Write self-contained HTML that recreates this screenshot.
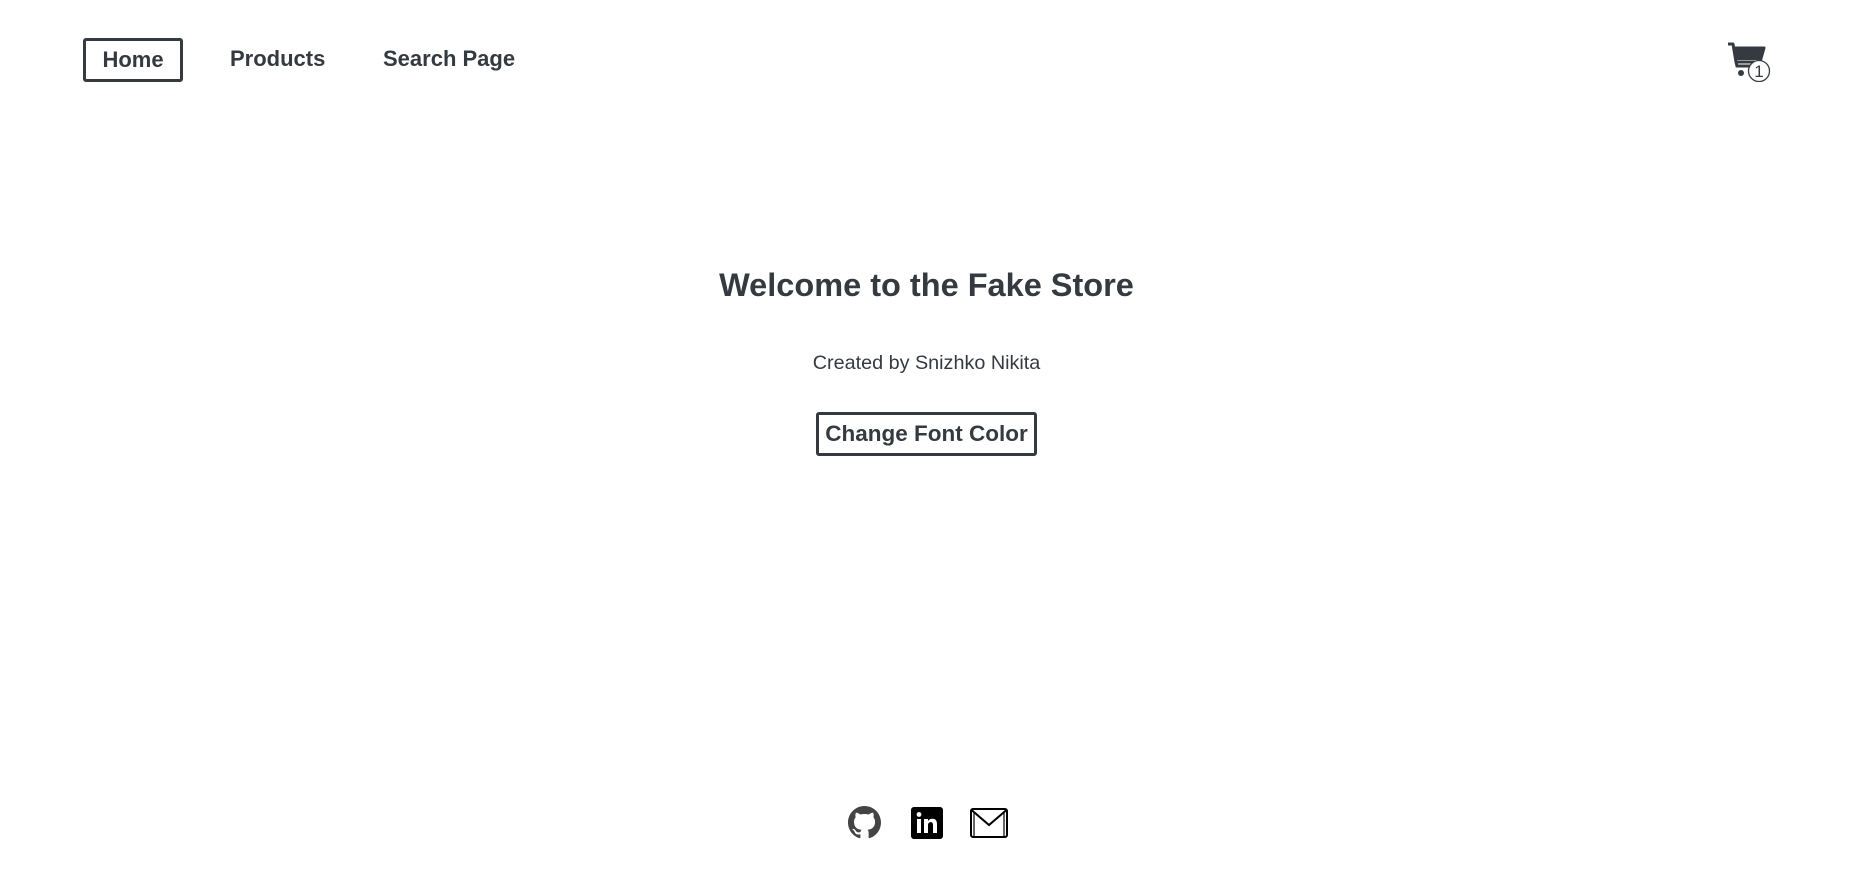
<!DOCTYPE html>
<html><head><meta charset="utf-8"><style>
*{margin:0;padding:0;box-sizing:border-box}
body{width:1853px;height:879px;background:#fff;font-family:"Liberation Sans",Arial,sans-serif;color:#343a40;position:relative;overflow:hidden}
.nav a{position:absolute;font-weight:bold;font-size:22px;color:#343a40;text-decoration:none;line-height:26px}
.home{left:83px;top:38px;width:100px;height:44px;border:3px solid #343a40;border-radius:3px;display:flex;align-items:center;justify-content:center}
h1{position:absolute;left:0;width:1853px;text-align:center;top:266px;font-size:32.5px;line-height:38px}
.sub{position:absolute;left:0;width:1853px;text-align:center;top:351px;font-size:19.8px;line-height:24px}
.btn{position:absolute;left:816px;top:412px;width:221px;height:44px;border:3px solid #343a40;border-radius:3px;font-weight:bold;font-size:22.5px;display:flex;align-items:center;justify-content:center}
</style></head><body>
<div class="nav">
<a class="home" style="position:absolute">Home</a>
<a style="left:230px;top:46px">Products</a>
<a style="left:383px;top:46px">Search Page</a>
</div>
<svg style="position:absolute;left:1726px;top:40px" width="50" height="42" viewBox="0 0 50 42">
<path d="M2 4 H7 L10 22 H34 L38 8 H9" fill="none" stroke="#343a40" stroke-width="3" stroke-linejoin="round"/>
<path d="M9 8 H38 L34 20 H10 Z" fill="#343a40"/>
<path d="M10 22 L11 26 H32" fill="none" stroke="#343a40" stroke-width="3"/>
<circle cx="15" cy="33" r="3" fill="#343a40"/>
<circle cx="33" cy="31" r="10.5" fill="#fff" stroke="#343a40" stroke-width="1.3"/>
<text x="33" y="37" text-anchor="middle" font-family="Liberation Sans" font-size="17" fill="#343a40">1</text>
</svg>
<h1>Welcome to the Fake Store</h1>
<div class="sub">Created by Snizhko Nikita</div>
<div class="btn">Change Font Color</div>
<svg style="position:absolute;left:848px;top:806px" width="33" height="33" viewBox="0 0 16 16"><path fill="#444" d="M8 0C3.58 0 0 3.580 0 8c0 3.54 2.29 6.53 5.47 7.59.4.07.55-.17.55-.38 0-.19-.01-.82-.01-1.49-2.010.37-2.53-.49-2.69-.94-.09-.23-.48-.94-.82-1.13-.28-.15-.68-.52-.01-.53.63-.01 1.08.58 1.23.82.72 1.21 1.87.87 2.33.66.07-.52.28-.87.51-1.07-1.78-.2-3.64-.89-3.64-3.95 0-.87.31-1.59.82-2.15-.08-.2-.36-1.02.08-2.12 0 0 .67-.21 2.2.82.64-.18 1.32-.27 2-.27.68 0 1.36.09 2 .27 1.53-1.04 2.2-.82 2.2-.82.44 1.1.16 1.92.08 2.12.51.56.82 1.27.82 2.15 0 3.07-1.87 3.75-3.65 3.95.29.25.54.73.54 1.48 0 1.07-.01 1.93-.01 2.2 0 .21.15.46.55.38A8.013 8.013 0 0016 8c0-4.42-3.58-8-8-8z"/></svg>
<svg style="position:absolute;left:911px;top:807px" width="32" height="32" viewBox="0 0 32 32"><rect width="32" height="32" rx="3" fill="#000"/><rect x="6" y="12" width="4" height="14" fill="#fff"/><circle cx="8" cy="7.5" r="2.4" fill="#fff"/><path d="M13 12h4v2c1-1.6 2.6-2.3 4.5-2.3 3.2 0 4.5 2 4.5 5.5V26h-4v-8c0-1.8-.6-2.9-2.2-2.9-1.700 0-2.8 1.1-2.8 3V26h-4z" fill="#fff"/></svg>
<svg style="position:absolute;left:970px;top:808px" width="38" height="30" viewBox="0 0 38 30"><rect x="1" y="1" width="36" height="28" rx="2" fill="none" stroke="#000" stroke-width="2"/><path d="M1.5 2 L19 17 L36.5 2" fill="none" stroke="#000" stroke-width="2"/><path d="M4 4v24M34 4v24" stroke="#000" stroke-width="1.2"/></svg>
</body></html>
